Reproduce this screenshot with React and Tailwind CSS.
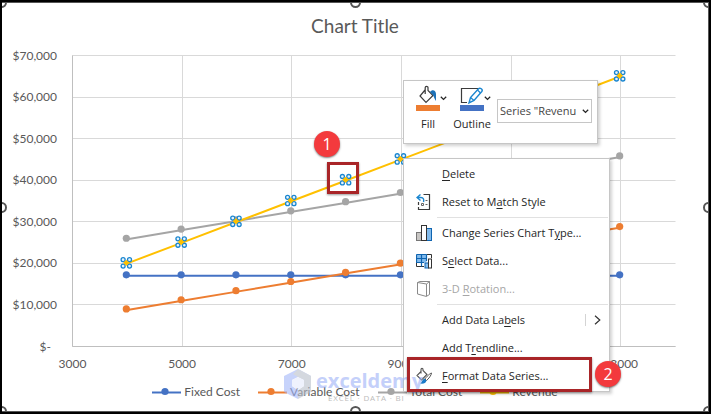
// src/pages/CostVolumeChart.jsx
import { useState } from 'react';

const CHART = { left: 70.5, right: 673.5, top: 9.5, bottom: 300.5 };

const UNITS = [4000, 5000, 6000, 7000, 8000, 9000, 10000, 11000, 12000, 13000];

const SERIES = [
  { name: 'Fixed Cost', color: '#4472c4', value: () => 17000 },
  { name: 'Variable Cost', color: '#ed7d31', value: (u) => u * 2.2 },
  { name: 'Total Cost', color: '#a5a5a5', value: (u) => 17000 + u * 2.2 },
  { name: 'Revenue', color: '#ffc000', value: (u) => u * 5, selected: true }
];

const COSTS = [70000, 60000, 50000, 40000, 30000, 20000, 10000, 0];
const TICKS = [3000, 5000, 7000, 9000, 11000, 13000];

const toX = (units) => CHART.left + ((units - 3000) / 11000) * (CHART.right - CHART.left);
const toY = (cost) => CHART.bottom - (cost / 70000) * (CHART.bottom - CHART.top);
const crisp = (n) => Math.floor(n) + 0.5;

const SelectedMarker = ({ x, y }) => (
  <g>
    {[[-3.2, -3.2], [3.2, -3.2], [-3.2, 3.2], [3.2, 3.2]].map(([dx, dy]) => (
      <circle key={`${dx}${dy}`} cx={x + dx} cy={y + dy} r="2" fill="#e8f4fc" stroke="#1a86d0" strokeWidth="1.3" />
    ))}
    <path d={`M${x} ${y - 3.2}L${x + 3.2} ${y}L${x} ${y + 3.2}L${x - 3.2} ${y}Z`} fill="#ffc000" />
  </g>
);

const LineChart = () => (
  <svg viewBox="0 0 706 330" className="block w-full font-[Lato,sans-serif] text-[12px]" role="img" aria-label="Cost and revenue by units">
    <g stroke="#d9d9d9">
      {COSTS.map((cost) => (
        <line key={cost} x1={CHART.left} x2={CHART.right} y1={crisp(toY(cost))} y2={crisp(toY(cost))} />
      ))}
      {TICKS.map((tick) => (
        <line key={tick} x1={crisp(toX(tick))} x2={crisp(toX(tick))} y1={CHART.top} y2={CHART.bottom} />
      ))}
    </g>
    <path d={`M${CHART.left} ${CHART.top}V${CHART.bottom}H${CHART.right}`} fill="none" stroke="#bfbfbf" />

    <g fill="#595959">
      {COSTS.map((cost) => (
        <text key={cost} x={cost ? 55 : 49} y={toY(cost) + 4} textAnchor="end">
          {cost ? `$${cost.toLocaleString('en-US')}` : '$-'}
        </text>
      ))}
      {TICKS.map((tick) => (
        <text key={tick} x={toX(tick)} y="322" textAnchor="middle">{tick}</text>
      ))}
    </g>

    {SERIES.map((s) => (
      <g key={s.name}>
        <polyline
          points={UNITS.map((u) => `${toX(u)},${toY(s.value(u))}`).join(' ')}
          fill="none"
          stroke={s.color}
          strokeWidth="2"
        />
        {UNITS.map((u) =>
          s.selected ? (
            <SelectedMarker key={u} x={toX(u) - 1} y={toY(s.value(u)) - 0.5} />
          ) : (
            <circle key={u} cx={toX(u) - 1} cy={toY(s.value(u)) - 1} r="3.6" fill={s.color} />
          )
        )}
      </g>
    ))}
  </svg>
);

const Legend = () => (
  <ul className="flex justify-center gap-[18px] font-[Lato,sans-serif] text-[12px] leading-4 text-[#595959]">
    {SERIES.map((s) => (
      <li key={s.name} className="flex items-center gap-[3px] whitespace-nowrap">
        <svg width="29" height="10" viewBox="0 0 29 10">
          <path d="M0 5.5H29" stroke={s.color} strokeWidth="2" />
          <circle cx="13" cy="4.5" r="3.6" fill={s.color} />
        </svg>
        {s.name}
      </li>
    ))}
  </ul>
);

const Chevron = () => (
  <svg width="7" height="5" viewBox="0 0 7 5" fill="none" stroke="#262626" strokeWidth="1.3">
    <path d="M0.8 0.8L3.5 3.4L6.2 0.8" />
  </svg>
);

const FillIcon = () => (
  <svg width="24" height="26" viewBox="0 0 24 26" fill="none">
    <path d="M9 5L4 11L10 17.5L17 10.5L12 5.5V2.5C12 1 9.2 1 9.2 2.5V9" stroke="#3b3b3b" strokeWidth="1.2" />
    <path d="M14 7C16 4 20 5 20 9V16C18.5 14 18 12 17 10Z" fill="#1e72b8" />
    <rect y="20" width="24" height="6" fill="#ed7d31" />
  </svg>
);

const OutlineIcon = () => (
  <svg width="24" height="26" viewBox="0 0 24 26" fill="none">
    <path d="M18 3.5H1.5V17.5H7" stroke="#3b3b3b" strokeWidth="1.2" />
    <path d="M9 18L10.5 12.5L18.5 3.8C20 2.2 23.3 4.5 21.8 6.5L14 15.5Z" fill="#fff" stroke="#1a86d0" strokeWidth="1.4" />
    <path d="M10.5 12.5L14 15.5M17.5 5L20.5 8" stroke="#1a86d0" strokeWidth="1.2" />
    <rect y="20" width="24" height="6" fill="#4472c4" />
  </svg>
);

const ResetIcon = () => (
  <svg width="16" height="18" viewBox="0 0 16 18" fill="none">
    <path d="M7.5 1.5H13.5V16.5H2.5V14M2.5 12V9" stroke="#3b3b3b" strokeWidth="1.2" />
    <path d="M4.5 1.5L1 4.5L4.5 7.5M1 4.5H5C7.5 4.5 8 6.5 7.5 9" stroke="#1a86d0" strokeWidth="1.4" />
    <path d="M9.5 7.5H11.5M5.5 10.5H7.5V12.5H5.5ZM9.5 11.5H11.5" stroke="#666" />
  </svg>
);

const ChartTypeIcon = () => (
  <svg width="16" height="18" viewBox="0 0 16 18">
    <rect x="0.5" y="8.5" width="5" height="8" fill="#c8c6c4" stroke="#777" />
    <rect x="10.5" y="4.5" width="5" height="12" fill="#83bbec" stroke="#0f64b0" />
    <rect x="5.5" y="1.5" width="5" height="15" fill="#fff" stroke="#333" />
  </svg>
);

const SelectDataIcon = () => (
  <svg width="16" height="18" viewBox="0 0 16 18" fill="none">
    <path d="M0.5 2.5H10.5V10.5H0.5Z" fill="#83bbec" />
    <path d="M15.5 2.5V6M10.5 2.5H15.5M0.5 10.5V14.5H8" stroke="#333" />
    <path d="M0.5 2.5H10.5M0.5 6.5H10.5M0.5 10.5H8M0.5 2.5V11M5.5 2.5V14.5M10.5 2.5V9" stroke="#0f64b0" strokeWidth="1.2" />
    <rect x="9" y="11" width="3.5" height="5" fill="#83bbec" stroke="#0f64b0" />
    <rect x="12.5" y="7" width="3" height="9" fill="#fff" stroke="#333" />
  </svg>
);

const RotationIcon = () => (
  <svg width="16" height="18" viewBox="0 0 16 18" fill="none" stroke="#8a8a8a">
    <path d="M1.5 2.5L4 1.5H13.5V14.5L11 16" />
    <path d="M1.5 2.5L10.5 4V16.5L1.5 14Z" />
    <path d="M10.5 4L13.5 1.5" />
  </svg>
);

const FormatIcon = () => (
  <svg width="16" height="18" viewBox="0 0 16 18" fill="none">
    <path d="M5 4.5L1 8.5L5.5 13L11 7.5L7 3.5V2.5C7 1 5 1 5 2.5V6.5" stroke="#555" strokeWidth="1.1" />
    <path d="M15.5 6C14.5 6 10 10 9 12L10.5 13.5C12.5 12 15.5 8 15.5 6Z" fill="#fff" stroke="#555" />
    <path d="M8.5 11.5L10.5 13.5C10 16.5 7 17 4 16.5C6 15.5 6 12.5 8.5 11.5Z" fill="#1a7ac8" />
  </svg>
);

const MENU_GROUPS = [
  [
    { before: '', key: 'D', after: 'elete' },
    { before: 'Reset to M', key: 'a', after: 'tch Style', icon: <ResetIcon /> }
  ],
  [
    { before: 'Change Series Chart T', key: 'y', after: 'pe...', icon: <ChartTypeIcon /> },
    { before: 'S', key: 'e', after: 'lect Data...', icon: <SelectDataIcon /> },
    { before: '3-D ', key: 'R', after: 'otation...', icon: <RotationIcon />, disabled: true }
  ],
  [
    { before: 'Add Data La', key: 'b', after: 'els', submenu: true },
    { before: 'Add T', key: 'r', after: 'endline...' },
    { before: '', key: 'F', after: 'ormat Data Series...', icon: <FormatIcon /> }
  ]
];

const MenuItem = ({ item }) => (
  <li>
    <button
      type="button"
      disabled={item.disabled}
      className="flex h-7 w-full items-center pl-3 pr-2 text-left text-[#262626] enabled:hover:bg-[#e6e6e6] disabled:text-[#a6a6a6]"
    >
      <span className="mr-[10px] w-4 shrink-0">{item.icon}</span>
      <span className="flex-1 whitespace-nowrap">
        {item.before}
        <span className="underline underline-offset-2">{item.key}</span>
        {item.after}
      </span>
      {item.submenu && (
        <span className="flex h-3 items-center border-l border-[#d4d4d4] pl-2">
          <svg width="7" height="10" viewBox="0 0 7 10" fill="none" stroke="#333" strokeWidth="1.2">
            <path d="M1 0.8L5.8 5L1 9.2" />
          </svg>
        </span>
      )}
    </button>
  </li>
);

const ContextMenu = () => (
  <div className="absolute left-[401px] top-[155px] w-[207px] border border-[#c6c6c6] bg-white py-px shadow-[2px_2px_3px_rgba(0,0,0,0.18)]">
    {MENU_GROUPS.map((group, i) => (
      <ul key={group[0].after}>
        {i > 0 && <li role="separator" className="my-px ml-[33px] mr-px h-px bg-[#e1e1e1]" />}
        {group.map((item) => (
          <MenuItem key={item.after} item={item} />
        ))}
      </ul>
    ))}
  </div>
);

const ToolButton = ({ label, icon }) => (
  <button type="button" className="w-[38px] text-center">
    <span className="flex items-center justify-end">
      {icon}
      <Chevron />
    </span>
    <span className="mt-[5px] block leading-4">{label}</span>
  </button>
);

const MiniToolbar = () => {
  const [element, setElement] = useState('revenue');

  return (
    <div className="absolute left-[401px] top-[77px] flex items-start gap-[6px] border border-[#c6c6c6] bg-white px-[5px] pb-[11px] pt-1 text-[#262626] shadow-[2px_2px_3px_rgba(0,0,0,0.18)]">
      <ToolButton label="Fill" icon={<FillIcon />} />
      <ToolButton label="Outline" icon={<OutlineIcon />} />
      <span className="grid items-center pt-[14px]">
        <select
          aria-label="Chart element"
          value={element}
          onChange={(e) => setElement(e.target.value)}
          className="col-start-1 row-start-1 h-6 w-[95px] appearance-none border border-[#c6c6c6] bg-white pl-[2px] text-[#444]"
        >
          <option value="revenue">Series "Revenu</option>
        </select>
        <span className="pointer-events-none col-start-1 row-start-1 flex justify-end pr-[3px]">
          <Chevron />
        </span>
      </span>
    </div>
  );
};

const Badge = ({ className, children }) => (
  <span className={`absolute flex size-[26px] items-center justify-center rounded-full bg-[#f33a3d] text-[16px] text-white shadow-[0_1px_2px_rgba(0,0,0,0.5)] ${className}`}>
    {children}
  </span>
);

const Watermark = () => (
  <div className="pointer-events-none absolute left-[282px] top-[366px] flex items-start gap-1 opacity-60">
    <svg width="28" height="31" viewBox="0 0 28 31">
      <path d="M14 0L0 7V23L14 30V21L8 17V11L14 8L20 11L27 7Z" fill="#a3b6fa" />
      <path d="M14 0L27 7V23L14 30V21L20 17V11L14 8L9 5Z" fill="#b9bfcb" />
      <path d="M14 8L20 11V17L14 21L8 17V11Z" fill="#e6ebfd" />
    </svg>
    <div className="whitespace-nowrap">
      <div className="text-[20px] font-bold leading-6 text-[#9db1f8]">exceldemy</div>
      <div className="pl-3 text-[8px] leading-[10px] tracking-widest text-[#8f8f8f]">EXCEL · DATA · BI</div>
    </div>
  </div>
);

const Handle = () => <span className="size-[11px] rounded-full border-2 border-[#555] bg-white" />;

const SelectionHandles = () => (
  <div className="pointer-events-none absolute -inset-[6px] flex flex-col justify-between">
    {[3, 2, 3].map((count, row) => (
      <div key={row} className="flex justify-between">
        {Array.from({ length: count }, (_, i) => (
          <Handle key={i} />
        ))}
      </div>
    ))}
  </div>
);

const CostVolumeChart = () => {
  return (
    <main className="border-2 border-black bg-white font-['Open_Sans',sans-serif] text-[11px]">
      <div className="relative overflow-hidden border-y border-r border-[#555] pb-[11px]">
        <h1 className="pb-2 pt-[11px] text-center font-[Lato,sans-serif] text-[19px] leading-6 text-[#595959]">Chart Title</h1>
        <LineChart />
        <div className="pt-2">
          <Legend />
        </div>

        <SelectionHandles />
        <MiniToolbar />
        <ContextMenu />
        <Watermark />

        {/* Step callouts */}
        <span className="absolute left-[325px] top-[159px] size-8 border-3 border-[#a92528] shadow-[0_1px_2px_rgba(0,0,0,0.4)]" />
        <Badge className="left-[312px] top-[128px]">1</Badge>
        <span className="pointer-events-none absolute left-[405px] top-[354px] h-[35px] w-[185px] border-3 border-[#a92528] shadow-[0_1px_2px_rgba(0,0,0,0.4)]" />
        <Badge className="left-[593px] top-[358px]">2</Badge>
      </div>
    </main>
  );
};

export default CostVolumeChart;
